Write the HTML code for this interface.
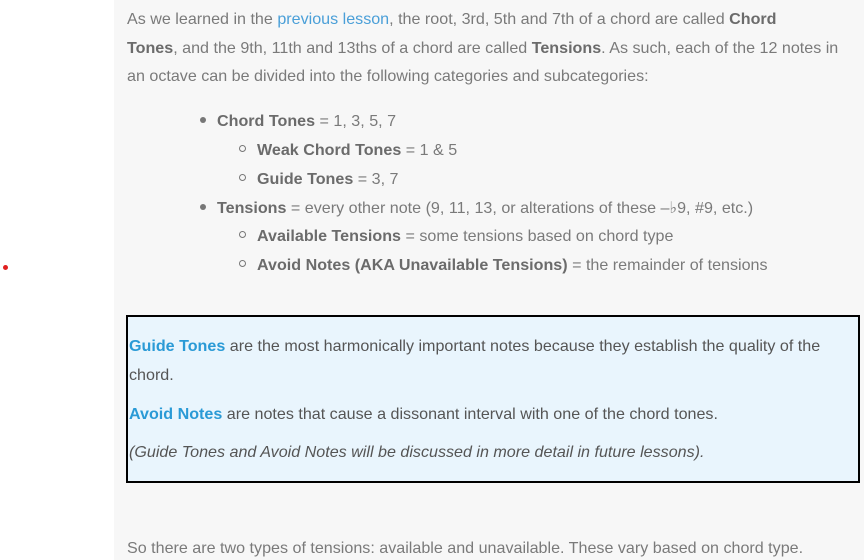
<!DOCTYPE html>
<html><head><style>
body{margin:0;width:864px;height:560px;background:#fff;position:relative;overflow:hidden;font-family:"Liberation Sans",sans-serif;color:#7a7a7a;font-size:16.1px;}
.gray{position:absolute;left:114px;top:0;width:750px;height:560px;background:#f7f7f7;}
.l{position:absolute;white-space:nowrap;line-height:20px;}
b{color:#6b6b6b;}
a{color:#4a9fd8;text-decoration:none;}
.dot{position:absolute;left:3px;top:265px;width:5px;height:5px;border-radius:50%;background:#e02020;}
.box{position:absolute;left:126px;top:315px;width:730px;height:164px;border:2px solid #000;background:#e9f5fd;}
.bl{color:#2a9ad6;}
.dk{color:#555;}
.bul{position:absolute;width:6px;height:6px;border-radius:50%;background:#777;}
.circ{position:absolute;width:5px;height:5px;border-radius:50%;border:1.3px solid #777;}
</style></head><body>
<div class="gray"></div>
<div class="dot"></div>
<div class="l" style="left:127px;top:9px">As we learned in the <a>previous lesson</a>, the root, 3rd, 5th and 7th of a chord are called <b>Chord</b></div>
<div class="l" style="left:127px;top:38px"><b>Tones</b>, and the 9th, 11th and 13ths of a chord are called <b>Tensions</b>. As such, each of the 12 notes in</div>
<div class="l" style="left:127px;top:66px">an octave can be divided into the following categories and subcategories:</div>

<div class="bul" style="left:200px;top:117px"></div>
<div class="l" style="left:217px;top:111px"><b>Chord Tones</b> = 1, 3, 5, 7</div>
<div class="circ" style="left:239px;top:145px"></div>
<div class="l" style="left:257px;top:140px"><b>Weak Chord Tones</b> = 1 &amp; 5</div>
<div class="circ" style="left:239px;top:174px"></div>
<div class="l" style="left:257px;top:169px"><b>Guide Tones</b> = 3, 7</div>
<div class="bul" style="left:200px;top:204px"></div>
<div class="l" style="left:217px;top:198px"><b>Tensions</b> = every other note (9, 11, 13, or alterations of these –♭9, #9, etc.)</div>
<div class="circ" style="left:239px;top:231px"></div>
<div class="l" style="left:257px;top:226px"><b>Available Tensions</b> = some tensions based on chord type</div>
<div class="circ" style="left:239px;top:260px"></div>
<div class="l" style="left:257px;top:255px"><b>Avoid Notes (AKA Unavailable Tensions)</b> = the remainder of tensions</div>

<div class="box"></div>
<div class="l dk" style="left:129px;top:336px"><b class="bl">Guide Tones</b> are the most harmonically important notes because they establish the quality of the</div>
<div class="l dk" style="left:129px;top:365px">chord.</div>
<div class="l dk" style="left:129px;top:404px"><b class="bl">Avoid Notes</b> are notes that cause a dissonant interval with one of the chord tones.</div>
<div class="l dk" style="left:129px;top:442px;font-style:italic">(Guide Tones and Avoid Notes will be discussed in more detail in future lessons).</div>

<div class="l" style="left:127px;top:538px">So there are two types of tensions: available and unavailable. These vary based on chord type.</div>
</body></html>
